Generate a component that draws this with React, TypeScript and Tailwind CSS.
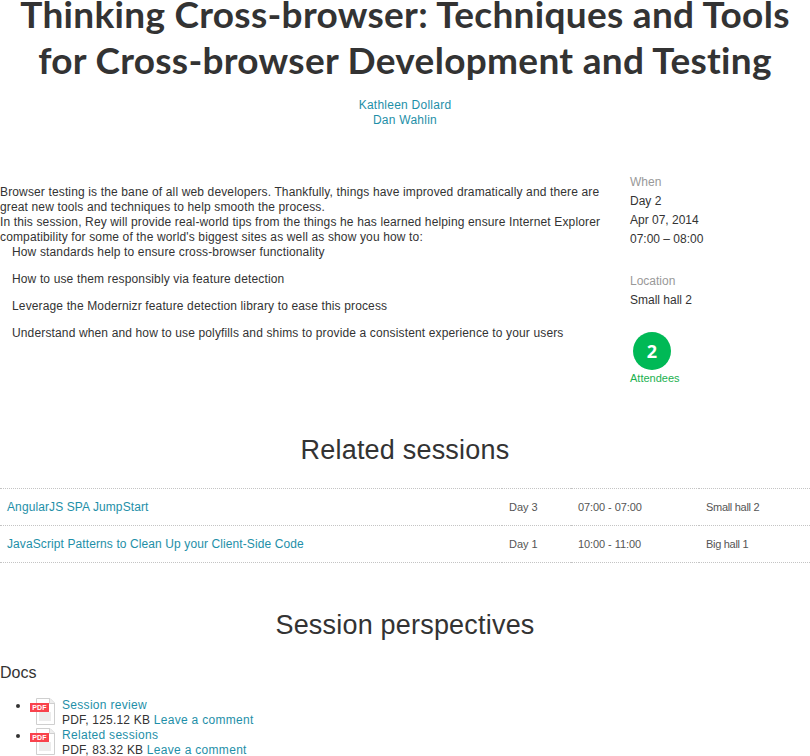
import React from 'react';

const sessions = [
  { title: 'AngularJS SPA JumpStart', day: 'Day 3', time: '07:00 - 07:00', hall: 'Small hall 2' },
  { title: 'JavaScript Patterns to Clean Up your Client-Side Code', day: 'Day 1', time: '10:00 - 11:00', hall: 'Big hall 1' },
];

const docs = [
  { title: 'Session review', size: 'PDF, 125.12 KB' },
  { title: 'Related sessions', size: 'PDF, 83.32 KB' },
];

const topics = [
  'How standards help to ensure cross-browser functionality',
  'How to use them responsibly via feature detection',
  'Leverage the Modernizr feature detection library to ease this process',
  'Understand when and how to use polyfills and shims to provide a consistent experience to your users',
];

const PdfIcon = () => (
  <svg width="25" height="27" viewBox="0 0 25 27" className="float-left mr-[7px]">
    <path d="M6.5 0.5H20L24.5 5V26.5H6.5Z" fill="#fff" stroke="#cfcfcf" />
    <path d="M19.5 0.5V5.5H24.5" fill="#eee" stroke="#cfcfcf" />
    <rect x="9" y="14" width="12" height="9" fill="#ececec" />
    <rect x="0" y="5" width="19" height="9" fill="#f9424c" />
    <text x="9.5" y="12" textAnchor="middle" fontSize="7" fontWeight="700" fill="#fff" fontFamily="Liberation Sans">PDF</text>
  </svg>
);

export default function App() {
  return (
    <div className="h-[756px] w-[810px] overflow-hidden bg-white font-['Liberation_Sans',Arial,sans-serif] text-xs leading-[15px] tracking-[0.14px] text-[#333]">
      <h1 className="flex flex-col gap-[18px] text-center font-['Lato',sans-serif] text-[37px] leading-[28px] font-bold tracking-[0.3px] text-[#333]">
        <span>Thinking Cross-browser: Techniques and Tools</span>
        <span>for Cross-browser Development and Testing</span>
      </h1>

      <div className="mt-[24px] text-center tracking-[0.25px] text-[#1e8fa8]">
        <div>Kathleen Dollard</div>
        <div>Dan Wahlin</div>
      </div>

      <div className="mt-[45px] flex">
        <div className="w-[630px] shrink-0 pt-[12px]">
          <p>
            Browser testing is the bane of all web developers. Thankfully, things have improved dramatically and there are
            <br />
            great new tools and techniques to help smooth the process.
            <br />
            In this session, Rey will provide real-world tips from the things he has learned helping ensure Internet Explorer
            <br />
            compatibility for some of the world's biggest sites as well as show you how to:
          </p>
          <ul className="flex flex-col gap-[12px] pl-[12px]">
            {topics.map((t) => (
              <li key={t}>{t}</li>
            ))}
          </ul>
        </div>

        <div className="flex flex-col tracking-normal">
          <div className="leading-[19px]">
            <div className="text-[#999]">When</div>
            <div>Day 2</div>
            <div>Apr 07, 2014</div>
            <div>07:00 – 08:00</div>
          </div>
          <div className="mt-[23px] leading-[19px]">
            <div className="text-[#999]">Location</div>
            <div>Small hall 2</div>
          </div>
          <div className="mt-[22px] ml-[3px] flex h-[38px] w-[38px] items-center justify-center rounded-full bg-[#00b956] font-['Open_Sans',sans-serif] text-[18px] font-bold text-white">
            2
          </div>
          <div className="mt-[1px] text-[11px] text-[#1bb14f]">Attendees</div>
        </div>
      </div>

      <h2 className="mt-[48px] text-center text-[27px] leading-[32px] tracking-[0.2px] text-[#333]">Related sessions</h2>

      <table className="mt-[22px] w-full table-fixed border-collapse">
        <tbody>
          {sessions.map((s) => (
            <tr key={s.title} className="h-[37px] border-y border-dotted border-[#c4c4c4]">
              <td className="w-[502px] pl-[7px] tracking-[0.1px] text-[#1e8fa8]">{s.title}</td>
              <td className="w-[69px] pl-[7px] text-[11px] tracking-normal text-[#555]">{s.day}</td>
              <td className="w-[128px] pl-[7px] text-[11px] tracking-[-0.08px] text-[#555]">{s.time}</td>
              <td className="pl-[7px] text-[11px] tracking-[-0.3px] text-[#555]">{s.hall}</td>
            </tr>
          ))}
        </tbody>
      </table>

      <h2 className="mt-[46px] text-center text-[27px] leading-[32px] tracking-[0.2px] text-[#333]">Session perspectives</h2>

      <h3 className="mt-[22px] text-base leading-[20px] tracking-normal text-[#333]">Docs</h3>

      <ul className="mt-[15px] list-disc pl-[30px] tracking-[0.2px]">
        {docs.map((d) => (
          <li key={d.title} className="h-[30px]">
            <PdfIcon />
            <div className="tracking-[0.3px] text-[#1e8fa8]">{d.title}</div>
            <div>
              {d.size} <span className="tracking-[0.3px] text-[#1e8fa8]">Leave a comment</span>
            </div>
          </li>
        ))}
      </ul>
    </div>
  );
}
